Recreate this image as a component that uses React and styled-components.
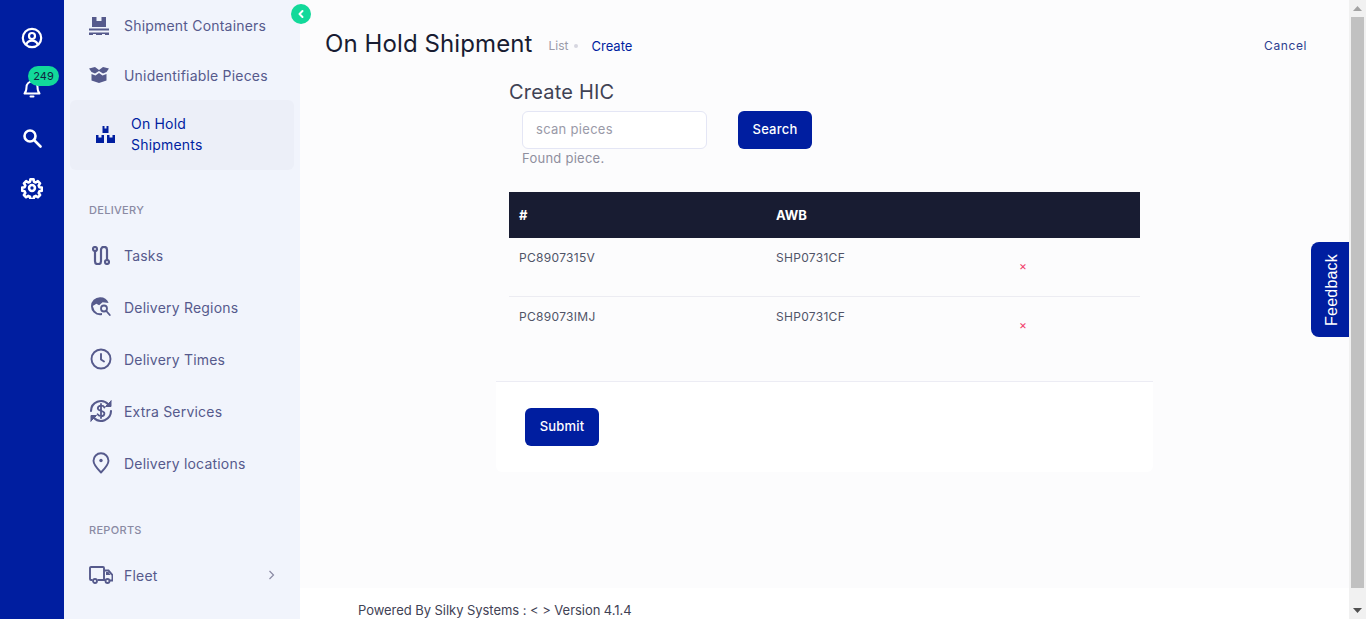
import React from "react";
import styled, { createGlobalStyle } from "styled-components";

const Global = createGlobalStyle`
  html, body {
    margin: 0;
    padding: 0;
    height: 100%;
    overflow: hidden;
    background: #fcfcfd;
    font-family: Inter, "Open Sans", "Liberation Sans", sans-serif;
  }
  * { box-sizing: border-box; }
`;

const Page = styled.div`
  display: flex;
  width: 1366px;
  height: 619px;
  overflow: hidden;
`;

const Rail = styled.nav`
  width: 64px;
  flex: none;
  background: #001ea0;
  display: flex;
  flex-direction: column;
  align-items: center;
  padding-top: 13px;
`;

const RailButton = styled.div`
  position: relative;
  width: 64px;
  height: 50px;
  display: flex;
  align-items: center;
  justify-content: center;
  color: #fff;
`;

const Badge = styled.span`
  position: absolute;
  left: 28px;
  top: 3px;
  width: 31px;
  height: 20px;
  border-radius: 10px;
  background: #12d99a;
  color: #10233f;
  font-size: 11px;
  line-height: 20px;
  text-align: center;
`;

const Sidebar = styled.aside`
  position: relative;
  width: 236px;
  flex: none;
  background: #f1f4fc;
  padding: 1px 6px 0;
`;

const Toggle = styled.button`
  position: absolute;
  top: 4px;
  right: -11px;
  width: 20px;
  height: 20px;
  padding: 0;
  border: none;
  border-radius: 50%;
  background: #12d99a;
  color: #fff;
  display: flex;
  align-items: center;
  justify-content: center;
`;

const NavItem = styled.a`
  display: flex;
  align-items: center;
  gap: ${(p) => (p.$active ? "14px" : "11px")};
  height: ${(p) => p.$height || 52}px;
  padding: ${(p) => (p.$active ? "0 14px 2px 23px" : "0 19px")};
  border-radius: 6px;
  background: ${(p) => (p.$active ? "#eceff8" : "transparent")};
  color: ${(p) => (p.$active ? "#001ea0" : "#565a8c")};
  font-size: 14px;
  line-height: 21px;
`;

const NavIcon = styled.span`
  width: 24px;
  height: 24px;
  flex: none;
  display: flex;
  align-items: center;
  justify-content: center;
  padding-right: ${(p) => p.$nudge || 0}px;
  color: inherit;
`;

const NavLabel = styled.span`
  flex: 1;
  max-width: ${(p) => (p.$narrow ? "110px" : "none")};
  letter-spacing: 0.2px;
`;

const SectionTitle = styled.div`
  height: 20px;
  margin: ${(p) => p.$top}px 0 ${(p) => p.$bottom}px;
  padding-left: 19px;
  color: #8a8aa3;
  font-size: 11px;
  font-weight: 500;
  line-height: 20px;
  letter-spacing: 0.3px;
`;

const Main = styled.main`
  flex: 1;
  display: flex;
  flex-direction: column;
  min-width: 0;
  background: #fcfcfd;
`;

const Header = styled.header`
  display: flex;
  align-items: center;
  height: 84px;
  padding: 2px 42px 0 25px;
`;

const Title = styled.h1`
  margin: 0 16px 0 0;
  color: #181c32;
  font-size: 24px;
  font-weight: 400;
  letter-spacing: 0.1px;
`;

const Crumb = styled.span`
  color: ${(p) => (p.$current ? "#001ea0" : "#9a9aa8")};
  font-size: ${(p) => (p.$current ? "13px" : "12px")};
  margin-top: 5px;
`;

const Dot = styled.i`
  width: 4px;
  height: 4px;
  margin: 5px 13px 0 6px;
  border-radius: 50%;
  background: #d6d6e0;
`;

const Cancel = styled.a`
  margin-left: auto;
  margin-top: 5px;
  color: #2c3e8f;
  font-size: 12px;
  letter-spacing: 0.6px;
`;

const Body = styled.div`
  flex: 1;
  padding-left: 196px;
`;

const Card = styled.section`
  width: 657px;
`;

const CardTop = styled.div`
  padding: 0 13px;
`;

const CardTitle = styled.h2`
  margin: 0;
  height: 27px;
  color: #3f4254;
  font-size: 20px;
  font-weight: 400;
  line-height: 16px;
  letter-spacing: 0.2px;
`;

const SearchRow = styled.div`
  display: flex;
  gap: 31px;
  padding-left: 13px;
`;

const SearchInput = styled.input`
  width: 185px;
  height: 38px;
  padding: 0 13px 2px;
  border: 1px solid #e4e6f5;
  border-radius: 6px;
  background: #fff;
  font: inherit;
  font-size: 13px;
  letter-spacing: 0.3px;
  &::placeholder { color: #9a9aa8; opacity: 1; }
`;

const PrimaryButton = styled.button`
  width: 74px;
  height: 38px;
  padding: 0 0 2px;
  border: none;
  border-radius: 6px;
  background: #001ea0;
  color: #fff;
  font: inherit;
  font-size: 13px;
  font-weight: 500;
  letter-spacing: 0.2px;
`;

const Hint = styled.div`
  height: 43px;
  padding-left: 13px;
  color: #8f8f9e;
  font-size: 13px;
  line-height: 18px;
  letter-spacing: 0.25px;
`;

const Table = styled.div`
  margin: 0 13px;
`;

const Row = styled.div`
  display: grid;
  grid-template-columns: 257px 240px 1fr;
  height: ${(p) => p.$height}px;
  padding-left: 10px;
  border-bottom: ${(p) => (p.$line ? "1px solid #ececf2" : "none")};
`;

const HeadRow = styled(Row)`
  align-items: center;
  background: #181c32;
  color: #fff;
  font-size: 13px;
  font-weight: 700;
`;

const Cell = styled.div`
  padding-top: 12px;
  color: #505468;
  font-size: 12px;
  line-height: 16px;
  letter-spacing: 0.3px;
`;

const RemoveCell = styled.div`
  padding: 20px 0 0 3px;
  color: #f1416c;
  font-size: 12px;
  line-height: 16px;
`;

const CardFooter = styled.div`
  height: 91px;
  padding: 26px 29px;
  background: #fff;
  border-top: 1px solid #ececf4;
  border-radius: 0 0 6px 6px;
`;

const Footer = styled.footer`
  height: 31px;
  margin-top: auto;
  padding: 13px 0 0 58px;
  background: #fff;
  color: #3f4254;
  font-size: 13px;
  line-height: 18px;
  letter-spacing: -0.05px;
  white-space: nowrap;
`;

const Feedback = styled.button`
  position: absolute;
  left: 1311px;
  top: 242px;
  width: 38px;
  height: 95px;
  padding: 0 0 0 4px;
  border: none;
  border-radius: 8px 0 0 8px;
  background: #001ea0;
  color: #fff;
  font-family: "Liberation Sans", sans-serif;
  font-size: 16px;
  letter-spacing: 0.2px;
  display: flex;
  align-items: center;
  justify-content: center;
`;

const FeedbackText = styled.span`
  writing-mode: vertical-rl;
  transform: rotate(180deg);
`;

const Scrollbar = styled.div`
  width: 17px;
  flex: none;
  display: flex;
  flex-direction: column;
  align-items: center;
  background: #f1f1f1;
`;

const ScrollArrow = styled.div`
  height: 17px;
  flex: none;
  display: flex;
  align-items: center;
  justify-content: center;
  color: ${(p) => (p.$dim ? "#a3a3a3" : "#505050")};
`;

const ScrollThumb = styled.div`
  width: 13px;
  height: 571px;
  background: #c1c1c1;
`;

const ScrollSpace = styled.div`
  flex: 1;
`;

const stroke = { fill: "none", stroke: "currentColor", strokeLinecap: "round", strokeLinejoin: "round" };

const ProfileIcon = () => (
  <svg width="22" height="22" viewBox="0 0 22 22" {...stroke} strokeWidth="2.2">
    <circle cx="11" cy="11" r="9.2" />
    <circle cx="11" cy="9" r="3" />
    <path d="M5.5 17c1-2.4 3-3.4 5.500-3.400s4.500 1 5.500 3.400" />
  </svg>
);

const BellIcon = () => (
  <svg width="20" height="20" viewBox="0 0 20 20" {...stroke} strokeWidth="2">
    <path d="M2.500 15.500h15c-1.500-1.500-2-3-2-6.500a5.500 5.500 0 0 0-11 0c0 3.500-.5 5-2 6.500z" />
    <path d="M8.500 18.500h3" />
  </svg>
);

const SearchIcon = () => (
  <svg width="20" height="20" viewBox="0 0 20 20" {...stroke} strokeWidth="2.600">
    <circle cx="8" cy="8" r="5.500" />
    <path d="M12.500 12.500l6 6" />
  </svg>
);

const GearIcon = () => (
  <svg width="22" height="22" viewBox="0 0 24 24" {...stroke} strokeWidth="2.800">
    <circle cx="12" cy="12" r="3.200" />
    <path d="M10.300 2.500h3.400l.5 2.700 1.900.8 2.300-1.500 2.400 2.400-1.500 2.300.8 1.900 2.700.5v3.400l-2.700.5-.8 1.900 1.500 2.300-2.400 2.400-2.300-1.500-1.900.8-.5 2.700h-3.400l-.5-2.700-1.900-.8-2.300 1.500-2.400-2.400 1.500-2.300-.8-1.900-2.700-.5v-3.400l2.700-.5.8-1.900-1.500-2.300 2.400-2.400 2.300 1.500 1.900-.8z" />
  </svg>
);

const PalletIcon = () => (
  <svg width="20" height="18" viewBox="0 0 20 18" fill="currentColor">
    <path fillRule="evenodd" d="M3 0h4.500v4h5V0H17v10H3zM0 11.500h20v2H0zM0 15.500h20V18h-4v-1h-3v1H7v-1H4v1H0z" />
  </svg>
);

const OpenBoxIcon = () => (
  <svg width="20" height="16" viewBox="0 0 20 16" fill="currentColor">
    <path d="M0 1.500L6 0l4 3 4-3 6 1.500-2.500 3.500L14 6.500 10 4 6 6.500 2.500 5zM2.500 7l4 1.500L10 6l3.500 2.500 4-1.500v6.500L10 16l-7.500-2.500z" />
  </svg>
);

const BoxesIcon = () => (
  <svg width="19" height="17" viewBox="0 0 19 17" fill="currentColor">
    <path d="M6.500 0h2v2.500h2V0h2v7h-6zM0 9h2.500v2.500h3V9H8v8H0zM11 9h2.500v2.500h3V9H19v8h-8z" />
  </svg>
);

const RouteIcon = () => (
  <svg width="18" height="19" viewBox="0 0 18 19" {...stroke} strokeWidth="2.200">
    <circle cx="3" cy="3" r="2" />
    <circle cx="15" cy="16" r="2" />
    <path d="M3 5v10.200a3 3 0 0 0 6 0V3.800a3 3 0 0 1 6 0V14" />
  </svg>
);

const GlobeSearchIcon = () => (
  <svg width="22" height="22" viewBox="0 0 22 22">
    <path d="M10 1.200a9 9 0 1 0 0 18c.8 0 1.300-.1 2-.3v-2a7 7 0 0 1-7.500-2.500L2.800 10l3.600-2.200 2.700 1.500 3.500-3 6 .8A9 9 0 0 0 10 1.200z" fill="currentColor" />
    <circle cx="14" cy="12.500" r="3" fill="none" stroke="currentColor" strokeWidth="1.800" />
    <path d="M16.300 15l3.500 4" fill="none" stroke="currentColor" strokeWidth="1.800" strokeLinecap="round" />
  </svg>
);

const ClockIcon = () => (
  <svg width="22" height="22" viewBox="0 0 22 22" {...stroke} strokeWidth="1.900">
    <circle cx="11" cy="11" r="9.500" />
    <path d="M11 6v5.500l3 2" />
  </svg>
);

const DollarSyncIcon = () => (
  <svg width="24" height="24" viewBox="0 0 24 24" {...stroke} strokeWidth="2.100">
    <path d="M2 12A10 10 0 0 1 19.200 5.200" />
    <path d="M22 12A10 10 0 0 1 4.800 18.800" />
    <path d="M22 2v5.500h-5.500l5.500-5.500zM2 22v-5.500h5.500L2 22z" fill="currentColor" strokeWidth="1" />
    <path d="M15.500 8.500c-.6-1.200-1.800-1.800-3.400-1.800-2 0-3.300 1-3.300 2.500 0 3.400 6.600 1.900 6.600 5.200 0 1.600-1.400 2.700-3.400 2.700-1.600 0-2.900-.7-3.500-1.900M12 5v14" strokeWidth="1.800" />
  </svg>
);

const PinIcon = () => (
  <svg width="18" height="22" viewBox="0 0 18 22" {...stroke} strokeWidth="1.900">
    <path d="M9 20.500C5 16.500 1.500 13 1.500 8.800a7.500 7.500 0 0 1 15 0c0 4.200-3.500 7.700-7.500 11.700z" />
    <circle cx="9" cy="8.500" r="1.700" fill="currentColor" stroke="none" />
  </svg>
);

const TruckIcon = () => (
  <svg width="24" height="18" viewBox="0 0 24 18">
    <path d="M3.500 14H2a1 1 0 0 1-1-1V2a1 1 0 0 1 1-1h12a1 1 0 0 1 1 1v12H8.500" fill="none" stroke="currentColor" strokeWidth="1.900" />
    <path d="M15 4.500h4.500l4 4.500v5.500h-2.500M15 14h1" fill="none" stroke="currentColor" strokeWidth="1.900" />
    <path d="M17 6h2.500l2 3H17z" fill="currentColor" />
    <circle cx="6" cy="15" r="2" fill="none" stroke="currentColor" strokeWidth="1.800" />
    <circle cx="18.500" cy="15" r="2" fill="none" stroke="currentColor" strokeWidth="1.800" />
  </svg>
);

const Chevron = () => (
  <svg width="7" height="10" viewBox="0 0 7 10" fill="none" stroke="#8a8aa3" strokeWidth="1.200">
    <path d="M1.500 1l4 4-4 4" />
  </svg>
);

const BackIcon = () => (
  <svg width="8" height="10" viewBox="0 0 8 10" fill="none" stroke="currentColor" strokeWidth="2" strokeLinecap="round" strokeLinejoin="round">
    <path d="M5.500 2L2.500 5l3 3" />
  </svg>
);

const Triangle = ({ down }) => (
  <svg width="9" height="5" viewBox="0 0 9 5" fill="currentColor">
    <path d={down ? "M0 0h9L4.500 5z" : "M4.500 0L9 5H0z"} />
  </svg>
);

const pieces = [
  { id: "PC8907315V", awb: "SHP0731CF" },
  { id: "PC89073IMJ", awb: "SHP0731CF" }
];

const deliveryLinks = [
  { label: "Tasks", icon: <RouteIcon /> },
  { label: "Delivery Regions", icon: <GlobeSearchIcon /> },
  { label: "Delivery Times", icon: <ClockIcon /> },
  { label: "Extra Services", icon: <DollarSyncIcon /> },
  { label: "Delivery locations", icon: <PinIcon /> }
];

export default function App() {
  return (
    <Page>
      <Global />
      <Rail>
        <RailButton><ProfileIcon /></RailButton>
        <RailButton>
          <BellIcon />
          <Badge>249</Badge>
        </RailButton>
        <RailButton><SearchIcon /></RailButton>
        <RailButton><GearIcon /></RailButton>
      </Rail>

      <Sidebar>
        <Toggle><BackIcon /></Toggle>
        <NavItem $height={49}>
          <NavIcon $nudge={4}><PalletIcon /></NavIcon>
          <NavLabel>Shipment Containers</NavLabel>
        </NavItem>
        <NavItem $height={50}>
          <NavIcon $nudge={4}><OpenBoxIcon /></NavIcon>
          <NavLabel>Unidentifiable Pieces</NavLabel>
        </NavItem>
        <NavItem $active $height={70}>
          <NavIcon><BoxesIcon /></NavIcon>
          <NavLabel $narrow>On Hold Shipments</NavLabel>
        </NavItem>
        <SectionTitle $top={30} $bottom={9}>DELIVERY</SectionTitle>
        {deliveryLinks.map((link) => (
          <NavItem key={link.label}>
            <NavIcon>{link.icon}</NavIcon>
            <NavLabel>{link.label}</NavLabel>
          </NavItem>
        ))}
        <SectionTitle $top={31} $bottom={9}>REPORTS</SectionTitle>
        <NavItem>
          <NavIcon><TruckIcon /></NavIcon>
          <NavLabel>Fleet</NavLabel>
          <Chevron />
        </NavItem>
      </Sidebar>

      <Main>
        <Header>
          <Title>On Hold Shipment</Title>
          <Crumb>List</Crumb>
          <Dot />
          <Crumb $current>Create</Crumb>
          <Cancel>Cancel</Cancel>
        </Header>
        <Body>
          <Card>
            <CardTop>
              <CardTitle>Create HIC</CardTitle>
              <SearchRow>
                <SearchInput placeholder="scan pieces" />
                <PrimaryButton>Search</PrimaryButton>
              </SearchRow>
              <Hint>Found piece.</Hint>
            </CardTop>
            <Table>
              <HeadRow $height={46}>
                <div>#</div>
                <div>AWB</div>
              </HeadRow>
              {pieces.map((piece, index) => (
                <Row key={piece.id} $height={index === 0 ? 59 : 84} $line={index === 0}>
                  <Cell>{piece.id}</Cell>
                  <Cell>{piece.awb}</Cell>
                  <RemoveCell>×</RemoveCell>
                </Row>
              ))}
            </Table>
            <CardFooter>
              <PrimaryButton>Submit</PrimaryButton>
            </CardFooter>
          </Card>
        </Body>
        <Footer>Powered By Silky Systems : &lt; &gt; Version 4.1.4</Footer>
      </Main>

      <Feedback><FeedbackText>Feedback</FeedbackText></Feedback>

      <Scrollbar>
        <ScrollArrow $dim><Triangle /></ScrollArrow>
        <ScrollThumb />
        <ScrollSpace />
        <ScrollArrow><Triangle down /></ScrollArrow>
      </Scrollbar>
    </Page>
  );
}
